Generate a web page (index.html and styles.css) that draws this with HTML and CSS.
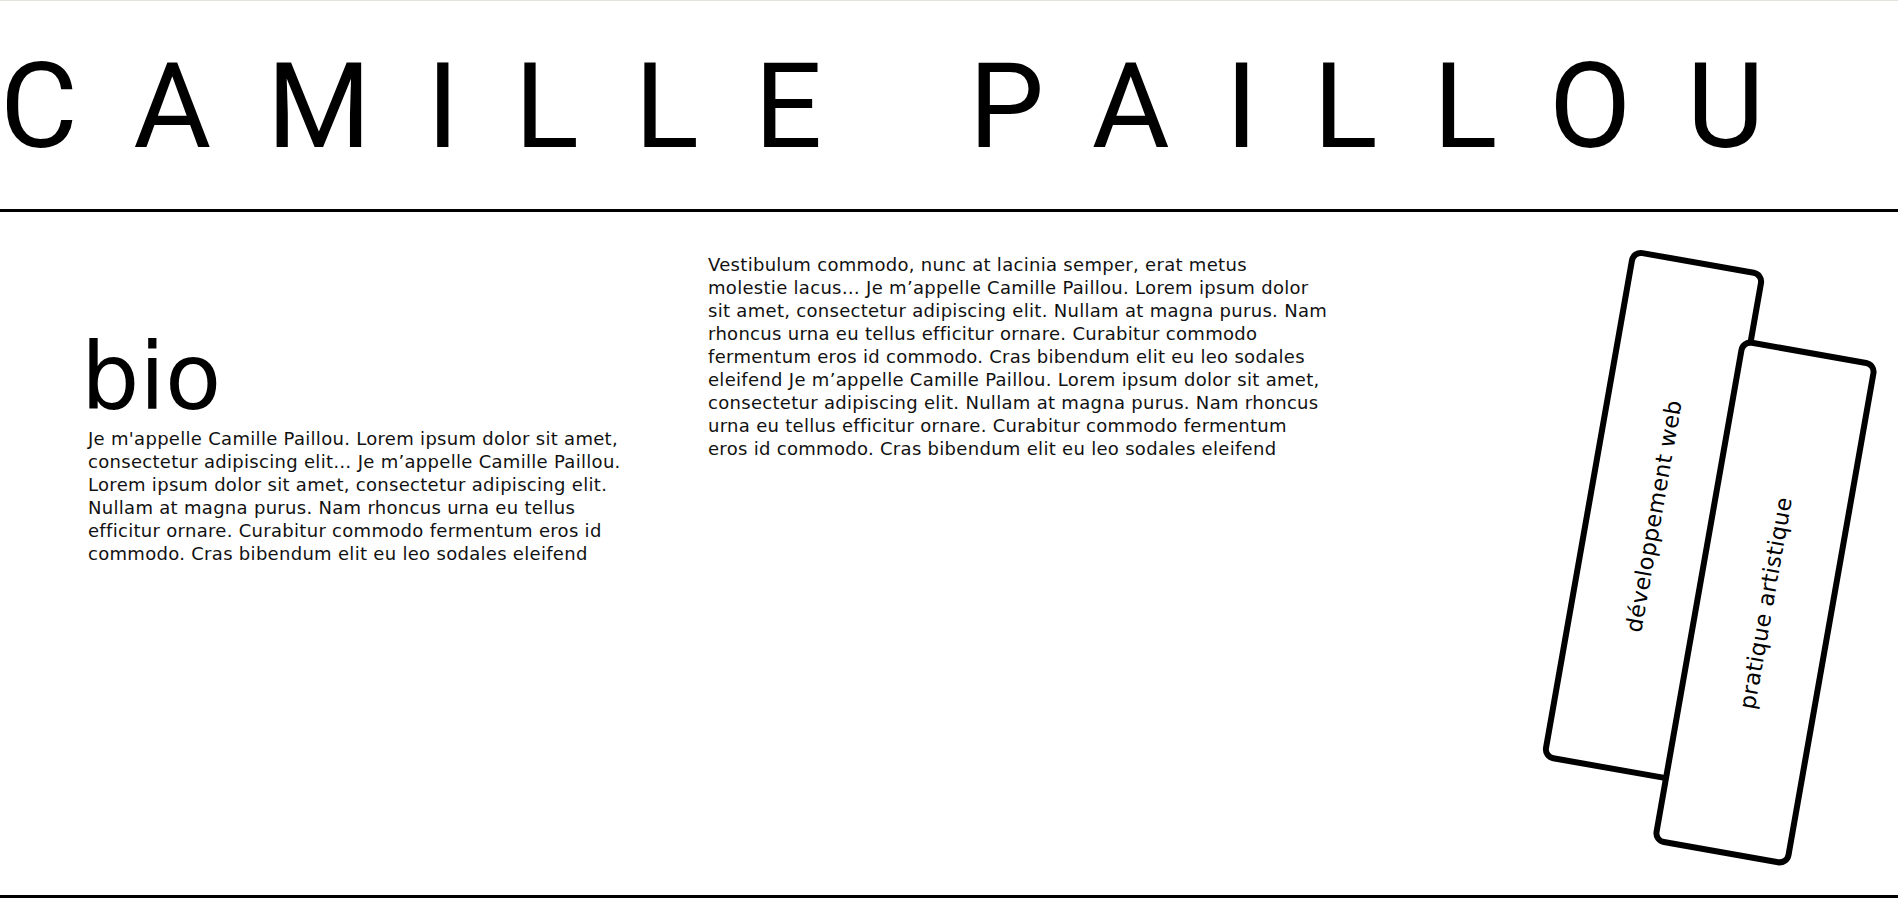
FILE: index.html
```html
<!DOCTYPE html>
<html lang="fr">
<head>
<meta charset="utf-8">
<title>Camille Paillou</title>
<link rel="stylesheet" href="styles.css">
</head>
<body>
<header class="site-header">
  <h1 class="title">CAMILLE PAILLOU</h1>
</header>
<main class="content">
  <section class="bio">
    <h2 class="bio-title">bio</h2>
    <p class="bio-text">Je m'appelle Camille Paillou. Lorem ipsum dolor sit amet, consectetur adipiscing elit… Je m’appelle Camille Paillou. Lorem ipsum dolor sit amet, consectetur adipiscing elit. Nullam at magna purus. Nam rhoncus urna eu tellus efficitur ornare. Curabitur commodo fermentum eros id commodo. Cras bibendum elit eu leo sodales eleifend</p>
  </section>
  <section class="intro">
    <p class="intro-text">Vestibulum commodo, nunc at lacinia semper, erat metus molestie lacus… Je m’appelle Camille Paillou. Lorem ipsum dolor sit amet, consectetur adipiscing elit. Nullam at magna purus. Nam rhoncus urna eu tellus efficitur ornare. Curabitur commodo fermentum eros id commodo. Cras bibendum elit eu leo sodales eleifend Je m’appelle Camille Paillou. Lorem ipsum dolor sit amet, consectetur adipiscing elit. Nullam at magna purus. Nam rhoncus urna eu tellus efficitur ornare. Curabitur commodo fermentum eros id commodo. Cras bibendum elit eu leo sodales eleifend</p>
  </section>
  <aside class="cards">
    <a class="card card-web" href="#"><span class="card-label">développement web</span></a>
    <a class="card card-art" href="#"><span class="card-label">pratique artistique</span></a>
  </aside>
</main>
<footer class="site-footer"></footer>
</body>
</html>
```
FILE: styles.css
```css
* { box-sizing: border-box; }

html, body {
  margin: 0;
  padding: 0;
  background: #fff;
  overflow: hidden;
}

body {
  font-family: "DejaVu Sans", "Liberation Sans", sans-serif;
  color: #111;
}

.site-header {
  border-top: 1px solid #dfe4dd;
  border-bottom: 3px solid #000;
  padding: 46px 0 42px 0;
}

.title {
  margin: 0;
  font-family: Roboto, "Liberation Sans", sans-serif;
  font-weight: 400;
  font-size: 119.5px;
  line-height: 1;
  letter-spacing: 55.5px;
  word-spacing: 6px;
  color: #000;
  white-space: nowrap;
}

.content {
  display: flex;
  height: 683px;
}

.bio {
  width: 638px;
  padding: 120px 0 0 88px;
  flex: none;
}

.bio-title {
  margin: 0;
  font-size: 92px;
  font-weight: 400;
  line-height: 1;
  color: #000;
  margin-left: -7px;
}

.bio-text {
  margin: 3px 0 0 0;
  font-size: 18px;
  letter-spacing: 0.3px;
  line-height: 23px;
}

.intro {
  width: 622px;
  margin-left: 70px;
  padding-top: 41px;
  flex: none;
}

.intro-text {
  margin: 0;
  font-size: 18px;
  letter-spacing: 0.3px;
  line-height: 23px;
}

.cards {
  flex: 1;
  position: relative;
}

.card {
  position: absolute;
  width: 137px;
  border: 6px solid #000;
  border-radius: 12px;
  background: #fff;
  transform: rotate(10deg);
  display: flex;
  align-items: center;
  justify-content: center;
  color: #000;
  text-decoration: none;
}

.card-web {
  left: 255px;
  top: 44px;
  height: 519px;
}

.card-art {
  left: 365px;
  top: 134px;
  height: 513px;
  width: 140px;
}

.card-label {
  display: block;
  white-space: nowrap;
  transform: rotate(-90deg);
  font-size: 22.5px;
  letter-spacing: 0.3px;
}

.site-footer {
  border-top: 3px solid #000;
}
```
